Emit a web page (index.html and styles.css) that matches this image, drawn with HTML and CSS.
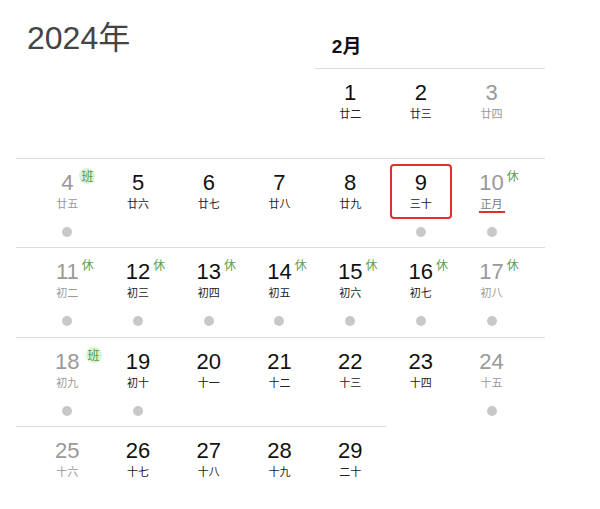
FILE: index.html
```html
<!DOCTYPE html>
<html lang="zh-CN">
<head>
<meta charset="utf-8">
<title>2024年2月</title>
<link rel="stylesheet" href="styles.css">
</head>
<body>
<main class="cal">
  <header class="head">
    <h1 class="year">2024年</h1>
    <h2 class="month">2月</h2>
  </header>

  <section class="week">
    <div class="rule rule-tail"></div>
    <div class="day"></div>
    <div class="day"></div>
    <div class="day"></div>
    <div class="day"></div>
    <div class="day"><div class="face"><span class="num">1</span><span class="lunar">廿二</span></div></div>
    <div class="day"><div class="face"><span class="num">2</span><span class="lunar">廿三</span></div></div>
    <div class="day off"><div class="face"><span class="num">3</span><span class="lunar">廿四</span></div></div>
  </section>

  <section class="week">
    <div class="rule"></div>
    <div class="day off"><div class="face"><span class="num">4<span class="tag work">班</span></span><span class="lunar">廿五</span></div><i class="dot"></i></div>
    <div class="day"><div class="face"><span class="num">5</span><span class="lunar">廿六</span></div></div>
    <div class="day"><div class="face"><span class="num">6</span><span class="lunar">廿七</span></div></div>
    <div class="day"><div class="face"><span class="num">7</span><span class="lunar">廿八</span></div></div>
    <div class="day"><div class="face"><span class="num">8</span><span class="lunar">廿九</span></div></div>
    <div class="day"><div class="face sel"><span class="num">9</span><span class="lunar">三十</span></div><i class="dot"></i></div>
    <div class="day off"><div class="face"><span class="num">10<span class="tag">休</span></span><span class="lunar new">正月</span></div><i class="dot"></i></div>
  </section>

  <section class="week">
    <div class="rule"></div>
    <div class="day off"><div class="face"><span class="num">11<span class="tag">休</span></span><span class="lunar">初二</span></div><i class="dot"></i></div>
    <div class="day"><div class="face"><span class="num">12<span class="tag">休</span></span><span class="lunar">初三</span></div><i class="dot"></i></div>
    <div class="day"><div class="face"><span class="num">13<span class="tag">休</span></span><span class="lunar">初四</span></div><i class="dot"></i></div>
    <div class="day"><div class="face"><span class="num">14<span class="tag">休</span></span><span class="lunar">初五</span></div><i class="dot"></i></div>
    <div class="day"><div class="face"><span class="num">15<span class="tag">休</span></span><span class="lunar">初六</span></div><i class="dot"></i></div>
    <div class="day"><div class="face"><span class="num">16<span class="tag">休</span></span><span class="lunar">初七</span></div><i class="dot"></i></div>
    <div class="day off"><div class="face"><span class="num">17<span class="tag">休</span></span><span class="lunar">初八</span></div><i class="dot"></i></div>
  </section>

  <section class="week">
    <div class="rule"></div>
    <div class="day off"><div class="face"><span class="num">18<span class="tag work">班</span></span><span class="lunar">初九</span></div><i class="dot"></i></div>
    <div class="day"><div class="face"><span class="num">19</span><span class="lunar">初十</span></div><i class="dot"></i></div>
    <div class="day"><div class="face"><span class="num">20</span><span class="lunar">十一</span></div></div>
    <div class="day"><div class="face"><span class="num">21</span><span class="lunar">十二</span></div></div>
    <div class="day"><div class="face"><span class="num">22</span><span class="lunar">十三</span></div></div>
    <div class="day"><div class="face"><span class="num">23</span><span class="lunar">十四</span></div></div>
    <div class="day off"><div class="face"><span class="num">24</span><span class="lunar">十五</span></div><i class="dot"></i></div>
  </section>

  <section class="week">
    <div class="rule rule-head"></div>
    <div class="day off"><div class="face"><span class="num">25</span><span class="lunar">十六</span></div></div>
    <div class="day"><div class="face"><span class="num">26</span><span class="lunar">十七</span></div></div>
    <div class="day"><div class="face"><span class="num">27</span><span class="lunar">十八</span></div></div>
    <div class="day"><div class="face"><span class="num">28</span><span class="lunar">十九</span></div></div>
    <div class="day"><div class="face"><span class="num">29</span><span class="lunar">二十</span></div></div>
  </section>
</main>
</body>
</html>
```

FILE: styles.css
```css
* {
  box-sizing: border-box;
  margin: 0;
  padding: 0;
}

body {
  background: #fff;
  font-family: "Liberation Sans", "Noto Sans CJK SC", sans-serif;
  width: 600px;
  height: 509px;
  overflow: hidden;
}

.cal {
  margin-left: 16px;
  width: 529px;
}

.head,
.week {
  display: grid;
  grid-template-columns: repeat(7, 70.714px);
  padding: 0 18px 0 16px;
}

.head {
  height: 68px;
}

.year {
  grid-column: 1 / 5;
  align-self: start;
  margin-left: -5px;
  margin-top: 20px;
  font-size: 32px;
  line-height: 37px;
  font-weight: 400;
  color: #444;
}

.month {
  grid-column: 5 / -1;
  align-self: start;
  padding-left: 17px;
  margin-top: 36px;
  font-size: 19px;
  line-height: 22px;
  font-weight: 700;
  color: #111;
}

.rule {
  grid-row: 1;
  grid-column: 1 / -1;
  height: 1px;
  background: #dcdcdc;
  margin: 0 -18px 0 -16px;
}

.rule-tail {
  grid-column: 5 / -1;
  margin-left: 0;
}

.rule-head {
  grid-column: 1 / 6;
  margin-right: 0;
}

.day {
  grid-row: 2;
  height: 88.5px;
  padding-top: 5px;
  display: flex;
  flex-direction: column;
  align-items: center;
}

.face {
  width: 62px;
  height: 55px;
  border: 2px solid transparent;
  border-radius: 4px;
  padding-top: 5px;
  display: flex;
  flex-direction: column;
  align-items: center;
}

.face.sel {
  border-color: #e0302a;
}

.num {
  position: relative;
  font-size: 22px;
  line-height: 24px;
  color: #111;
}

.lunar {
  font-family: "Noto Sans CJK SC", sans-serif;
  font-size: 11px;
  line-height: 16px;
  color: #222;
}

.off .num,
.off .lunar {
  color: #999;
}

.lunar.new {
  color: #777;
  padding: 0 2px;
  border-bottom: 2px solid #e0302a;
}

.tag {
  position: absolute;
  left: 100%;
  top: -2px;
  margin-left: 3px;
  font-family: "Noto Sans CJK SC", sans-serif;
  font-size: 12px;
  line-height: 14px;
  color: #5b9f4b;
}

.tag.work {
  top: -3px;
  margin-left: 6px;
  width: 16px;
  height: 16px;
  line-height: 16px;
  text-align: center;
  border-radius: 50%;
  background: #dcf3d3;
  font-size: 12px;
  color: #4f9a3f;
}

.dot {
  display: block;
  width: 10px;
  height: 10px;
  border-radius: 50%;
  background: #c8c8c8;
  margin-top: 8px;
}
```
